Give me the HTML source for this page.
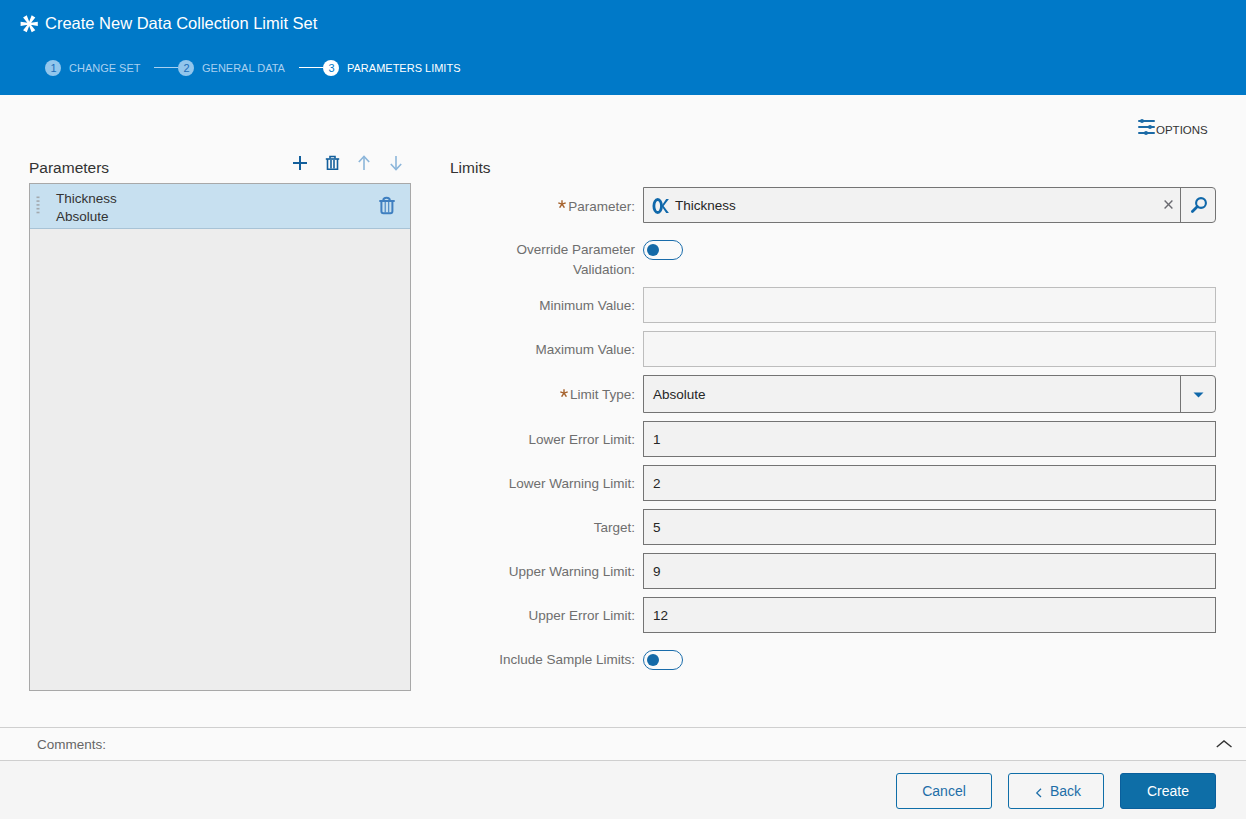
<!DOCTYPE html>
<html><head><meta charset="utf-8">
<style>
*{box-sizing:border-box;margin:0;padding:0}
html,body{width:1246px;height:819px;overflow:hidden;background:#fafafa;font-family:"Liberation Sans",sans-serif;position:relative}
.abs{position:absolute}
#hdr{left:0;top:0;width:1246px;height:95px;background:#0079c8}
.title{left:45px;top:13px;font-size:16.5px;line-height:20px;color:#fff;white-space:nowrap}
.step{font-size:11px;line-height:14px;color:#a9d0f0;white-space:nowrap}
.circ{width:16px;height:16px;border-radius:50%;background:#92c6ec;color:#1b6db8;font-size:11px;text-align:center;line-height:16px;padding-left:1px}
.circ.on{background:#fff;color:#0079c8}
.sline{height:1px;background:#a9d0f0}
.lbl{font-size:13.5px;line-height:20px;color:#6e6e6e;text-align:right;white-space:nowrap;right:611px}
.star{color:#a8642a;font-size:16px;margin-right:2px}
.inp{left:643px;width:573px;height:36px;border:1px solid #747474;background:#f2f2f2;font-size:13.5px;color:#262626}
.inp.dis{border-color:#bdbdbd;background:#f6f6f6}
.val{position:absolute;left:9px;top:8px;line-height:20px}
.tog{width:40px;height:20px;border:1.5px solid #196cab;border-radius:10px;left:643px}
.tog i{position:absolute;left:2.5px;top:2.5px;width:12px;height:12px;border-radius:50%;background:#146aa8}
.btn{top:773px;width:96px;height:36px;border:1px solid #0f6ea8;border-radius:3px;font-size:14px;color:#1d6ea8;text-align:center;line-height:34px;background:#f5f5f5}
</style></head>
<body>
<div id="hdr" class="abs">
  <svg class="abs" style="left:20px;top:14.5px" width="19" height="18" viewBox="0 0 19 18"><path d="M9.20 9.60 L17.80 10.90 L17.80 6.70 L9.20 8.00ZM8.51 9.20 L11.68 17.30 L15.32 15.20 L9.89 8.40ZM8.51 8.40 L3.08 15.20 L6.72 17.30 L9.89 9.20ZM9.20 8.00 L0.60 6.70 L0.60 10.90 L9.20 9.60ZM9.89 8.40 L6.72 0.30 L3.08 2.40 L8.51 9.20ZM9.89 9.20 L15.32 2.40 L11.68 0.30 L8.51 8.40Z" fill="#fff"/><circle cx="9.2" cy="8.8" r="1.6" fill="#fff"/></svg>
  <div class="abs title">Create New Data Collection Limit Set</div>
  <div class="abs circ" style="left:45px;top:60px">1</div>
  <div class="abs step" style="left:69px;top:61px">CHANGE SET</div>
  <div class="abs sline" style="left:154px;top:67px;width:24px"></div>
  <div class="abs circ" style="left:178px;top:60px">2</div>
  <div class="abs step" style="left:202px;top:61px">GENERAL DATA</div>
  <div class="abs sline" style="left:299px;top:67px;width:24px;background:#fff"></div>
  <div class="abs circ on" style="left:323px;top:60px">3</div>
  <div class="abs step" style="left:347px;top:61px;color:#fff">PARAMETERS LIMITS</div>
</div>

<!-- options -->
<svg class="abs" style="left:1137px;top:118px" width="18" height="18" viewBox="0 0 18 18"><g stroke="#1b6aa6" stroke-width="2" stroke-linecap="round"><line x1="2" y1="3" x2="17" y2="3"/><line x1="2" y1="9" x2="17" y2="9"/><line x1="2" y1="15" x2="17" y2="15"/></g><g fill="#1b6aa6"><circle cx="5" cy="3" r="2"/><circle cx="13" cy="9" r="2"/><circle cx="9" cy="15" r="2"/></g></svg>
<div class="abs" style="left:1156px;top:123px;font-size:11.5px;line-height:14px;color:#333">OPTIONS</div>

<!-- left panel -->
<svg class="abs" style="left:292px;top:155px" width="16" height="16" viewBox="0 0 16 16"><g stroke="#135f9c" stroke-width="2"><line x1="1" y1="8" x2="15" y2="8"/><line x1="8" y1="1" x2="8" y2="15"/></g></svg>
<svg class="abs" style="left:325px;top:155px" width="15" height="16" viewBox="0 0 15 16"><g fill="none" stroke="#135f9c" stroke-width="1.6"><path d="M5 3.5 V1.5 H10 V3.5"/><line x1="0.8" y1="4" x2="14.2" y2="4"/><path d="M2.5 4 V14.2 H12.5 V4"/><line x1="6" y1="5" x2="6" y2="13.5"/><line x1="9" y1="5" x2="9" y2="13.5"/></g></svg>
<svg class="abs" style="left:357px;top:155px" width="14" height="16" viewBox="0 0 14 16"><g fill="none" stroke="#8cb6da" stroke-width="1.6"><line x1="7" y1="1.5" x2="7" y2="15"/><path d="M1.8 7 L7 1.5 L12.2 7"/></g></svg>
<svg class="abs" style="left:389px;top:155px" width="14" height="16" viewBox="0 0 14 16"><g fill="none" stroke="#8cb6da" stroke-width="1.6"><line x1="7" y1="1" x2="7" y2="14.5"/><path d="M1.8 9 L7 14.5 L12.2 9"/></g></svg>
<div class="abs" style="left:29px;top:158px;font-size:15.5px;line-height:20px;color:#333">Parameters</div>
<div class="abs" style="left:29px;top:183px;width:382px;height:508px;border:1px solid #a8a8a8;background:#ededed">
  <div class="abs" style="left:0;top:0;width:380px;height:45px;background:#c7e0f0;border-bottom:1px solid #a8c3d6"></div>
  <div class="abs" style="left:26px;top:6px;font-size:13.5px;color:#333;line-height:18px">Thickness<br>Absolute</div>
  <svg class="abs" style="left:347.5px;top:11.5px" width="18" height="20" viewBox="0 0 18 20"><g fill="none" stroke="#3f7fc0" stroke-width="2"><path d="M5.3 4.3 C5.3 0.9 11.8 0.9 11.8 4.3"/><line x1="1.3" y1="5" x2="16.7" y2="5"/><path d="M3.4 5.3 V15.2 Q3.4 17.2 5.4 17.2 H12.4 Q14.4 17.2 14.4 15.2 V5.3"/></g><g stroke="#3f7fc0" stroke-width="1.1"><line x1="7.2" y1="6" x2="7.2" y2="16.5"/><line x1="10.7" y1="6" x2="10.7" y2="16.5"/></g></svg>
  <svg class="abs" style="left:6px;top:12px" width="5" height="19" viewBox="0 0 5 19"><g fill="#a3a9ae"><rect x="0.5" y="0.5" width="3" height="1.6"/><rect x="0.5" y="4.3" width="3" height="1.6"/><rect x="0.5" y="8.1" width="3" height="1.6"/><rect x="0.5" y="11.9" width="3" height="1.6"/><rect x="0.5" y="15.7" width="3" height="1.6"/></g></svg>
</div>

<!-- limits -->
<div class="abs" style="left:450px;top:158px;font-size:15.5px;line-height:20px;color:#333">Limits</div>

<div class="abs lbl" style="top:196.5px">Parameter:</div>
<svg class="abs" style="left:558px;top:200px" width="8" height="8" viewBox="0 0 8 8"><g stroke="#a5612b" stroke-width="1.4"><line x1="4" y1="0.3" x2="4" y2="4.4"/><line x1="0.3" y1="2.8" x2="4" y2="4.1"/><line x1="7.7" y1="2.8" x2="4" y2="4.1"/><line x1="1.6" y1="7.7" x2="4" y2="4.1"/><line x1="6.4" y1="7.7" x2="4" y2="4.1"/></g></svg>
<div class="abs inp" style="top:187px;border-radius:0 4px 4px 0"><span class="val" style="left:31px">Thickness</span>
  <svg class="abs" style="left:8px;top:9px" width="19" height="18" viewBox="0 0 19 18"><ellipse cx="5.7" cy="9" rx="3.8" ry="6.5" fill="none" stroke="#1068aa" stroke-width="2.8"/><path d="M9 9.8 L14.2 2 L16.9 2 L11.6 9 L16.9 16 L14.2 16 L9 8.2 Z" fill="#1068aa"/></svg>
  <svg class="abs" style="left:520px;top:12px" width="9" height="9" viewBox="0 0 9 9"><g stroke="#6a6a70" stroke-width="1.4"><line x1="0.6" y1="0.6" x2="8.4" y2="8.4"/><line x1="8.4" y1="0.6" x2="0.6" y2="8.4"/></g></svg>
  <div class="abs" style="left:536px;top:0;width:1px;height:34px;background:#747474"></div>
  <svg class="abs" style="left:546px;top:8px" width="18" height="18" viewBox="0 0 18 18"><circle cx="11" cy="7" r="4.9" fill="none" stroke="#1068aa" stroke-width="2.1"/><line x1="7.4" y1="10.6" x2="2.4" y2="15.6" stroke="#1068aa" stroke-width="2.8" stroke-linecap="round"/></svg>
</div>

<div class="abs lbl" style="top:240px">Override Parameter<br>Validation:</div>
<div class="abs tog" style="top:240px"><i></i></div>

<div class="abs lbl" style="top:296px">Minimum Value:</div>
<div class="abs inp dis" style="top:287px"></div>
<div class="abs lbl" style="top:340px">Maximum Value:</div>
<div class="abs inp dis" style="top:331px"></div>

<div class="abs lbl" style="top:385px">Limit Type:</div>
<svg class="abs" style="left:560px;top:389px" width="8" height="8" viewBox="0 0 8 8"><g stroke="#a5612b" stroke-width="1.4"><line x1="4" y1="0.3" x2="4" y2="4.4"/><line x1="0.3" y1="2.8" x2="4" y2="4.1"/><line x1="7.7" y1="2.8" x2="4" y2="4.1"/><line x1="1.6" y1="7.7" x2="4" y2="4.1"/><line x1="6.4" y1="7.7" x2="4" y2="4.1"/></g></svg>
<div class="abs inp" style="top:375px;height:38px;border-radius:0 4px 4px 0"><span class="val" style="top:9px">Absolute</span>
  <div class="abs" style="left:536px;top:0;width:1px;height:36px;background:#747474"></div>
  <svg class="abs" style="left:549px;top:15.5px" width="11" height="6" viewBox="0 0 11 6"><path d="M0.5 0.5 L10.5 0.5 L5.5 5.5 Z" fill="#1068aa"/></svg>
</div>

<div class="abs lbl" style="top:430px">Lower Error Limit:</div>
<div class="abs inp" style="top:421px"><span class="val">1</span></div>
<div class="abs lbl" style="top:474px">Lower Warning Limit:</div>
<div class="abs inp" style="top:465px"><span class="val">2</span></div>
<div class="abs lbl" style="top:518px">Target:</div>
<div class="abs inp" style="top:509px"><span class="val">5</span></div>
<div class="abs lbl" style="top:562px">Upper Warning Limit:</div>
<div class="abs inp" style="top:553px"><span class="val">9</span></div>
<div class="abs lbl" style="top:606px">Upper Error Limit:</div>
<div class="abs inp" style="top:597px"><span class="val">12</span></div>

<div class="abs lbl" style="top:650px">Include Sample Limits:</div>
<div class="abs tog" style="top:650px"><i></i></div>

<!-- comments -->
<div class="abs" style="left:0;top:727px;width:1246px;height:1px;background:#cfcfcf"></div>
<div class="abs" style="left:37px;top:735px;font-size:13.5px;line-height:20px;color:#666">Comments:</div>
<div class="abs" style="left:0;top:760px;width:1246px;height:59px;background:#f5f5f5;border-top:1px solid #cfcfcf"></div>

<svg class="abs" style="left:1215px;top:739px" width="18" height="10" viewBox="0 0 18 10"><path d="M1.8 8 L9 2 L16.5 8" fill="none" stroke="#333" stroke-width="1.4"/></svg>
<div class="abs btn" style="left:896px">Cancel</div>
<div class="abs btn" style="left:1008px;padding-left:19px">Back<svg class="abs" style="left:26px;top:14px" width="8" height="10" viewBox="0 0 8 10"><path d="M6 0.8 L1.8 4.9 L6 9" fill="none" stroke="#1d6ea8" stroke-width="1.3"/></svg></div>
<div class="abs btn" style="left:1120px;background:#0e6ea7;border:1px solid #0a5f9c;border-radius:3px;line-height:34px;color:#fff">Create</div>
</body></html>
